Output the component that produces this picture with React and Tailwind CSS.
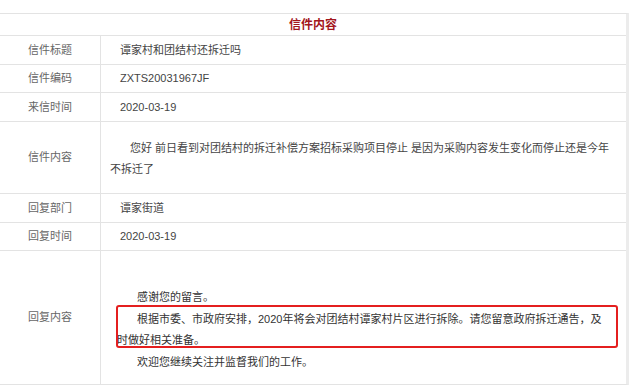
import React from "react";

const font = { fontFamily: '"Liberation Sans", "Noto Sans CJK SC", sans-serif' };

function Row({ label, h, children, last }) {
  return (
    <div
      className={`grid grid-cols-[100px_1fr] ${last ? "" : "border-b border-[#e3e3e3]"}`}
      style={{ height: h }}
    >
      <div className="flex items-center justify-center text-[11px] text-[#666]">{label}</div>
      <div className="flex items-center border-l border-[#e3e3e3] pl-[19px] pr-[12px] text-[11px] text-[#444]">
        {children}
      </div>
    </div>
  );
}

export default function App() {
  return (
    <div className="relative w-[640px] h-[388px] bg-white pt-[13px]" style={font}>
      <div className="w-[629px] border-t border-b border-r-[3px] border-t-[#e3e3e3] border-b-[#e3e3e3] border-r-[#ececec]">
        <div className="flex h-[22px] items-center justify-center border-b border-[#e3e3e3] text-[12px] font-bold text-[#a3161c]">
          信件内容
        </div>
        <Row label="信件标题" h={29}>谭家村和团结村还拆迁吗</Row>
        <Row label="信件编码" h={28}>ZXTS20031967JF</Row>
        <Row label="来信时间" h={29}>2020-03-19</Row>
        <Row label="信件内容" h={72}>
          <p className="indent-[10px] leading-[21px] pt-[2px]">
            您好 前日看到对团结村的拆迁补偿方案招标采购项目停止 是因为采购内容发生变化而停止还是今年
            <br />
            <span className="-ml-[10px]">不拆迁了</span>
          </p>
        </Row>
        <Row label="回复部门" h={29}>谭家街道</Row>
        <Row label="回复时间" h={28}>2020-03-19</Row>
        <Row label="回复内容" h={133} last>
          <div className="-ml-[3px] pt-[4px] leading-[21.5px] text-[#333]">
            <p>&nbsp;</p>
            <p className="pl-[20px]">感谢您的留言。</p>
            <p className="pl-[20px]">根据市委、市政府安排，2020年将会对团结村谭家村片区进行拆除。请您留意政府拆迁通告，及</p>
            <p>时做好相关准备。</p>
            <p className="pl-[20px]">欢迎您继续关注并监督我们的工作。</p>
          </div>
        </Row>
      </div>
      <div className="absolute left-[116px] top-[305px] h-[43px] w-[502px] rounded-[3px] border-2 border-[#e41f1f]" />
    </div>
  );
}
